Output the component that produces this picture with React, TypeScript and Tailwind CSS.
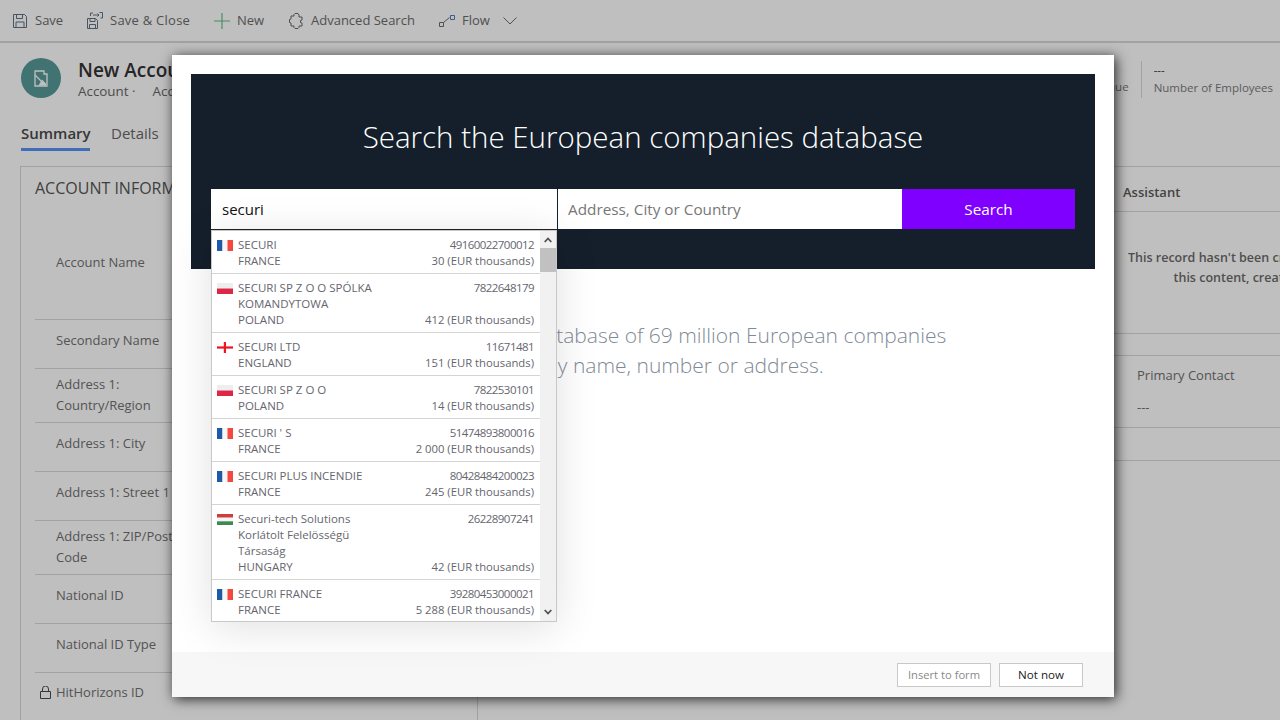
import React from 'react';

const font = "font-['Open_Sans','Noto_Sans',sans-serif]";

interface Company {
  flag: 'fr' | 'pl' | 'en' | 'hu';
  name: string[];
  country: string;
  id: string;
  revenue: string;
}

const companies: Company[] = [
  { flag: 'fr', name: ['SECURI'], country: 'FRANCE', id: '49160022700012', revenue: '30 (EUR thousands)' },
  { flag: 'pl', name: ['SECURI SP Z O O SPÓLKA', 'KOMANDYTOWA'], country: 'POLAND', id: '7822648179', revenue: '412 (EUR thousands)' },
  { flag: 'en', name: ['SECURI LTD'], country: 'ENGLAND', id: '11671481', revenue: '151 (EUR thousands)' },
  { flag: 'pl', name: ['SECURI SP Z O O'], country: 'POLAND', id: '7822530101', revenue: '14 (EUR thousands)' },
  { flag: 'fr', name: ["SECURI ' S"], country: 'FRANCE', id: '51474893800016', revenue: '2 000 (EUR thousands)' },
  { flag: 'fr', name: ['SECURI PLUS INCENDIE'], country: 'FRANCE', id: '80428484200023', revenue: '245 (EUR thousands)' },
  { flag: 'hu', name: ['Securi-tech Solutions', 'Korlátolt Felelösségü', 'Társaság'], country: 'HUNGARY', id: '26228907241', revenue: '42 (EUR thousands)' },
  { flag: 'fr', name: ['SECURI FRANCE'], country: 'FRANCE', id: '39280453000021', revenue: '5 288 (EUR thousands)' },
];

const formRows = [
  { label: ['Account Name'], cls: 'h-[79px] pt-[11px]' },
  { label: ['Secondary Name'], cls: 'h-[49px] pt-[10px]' },
  { label: ['Address 1:', 'Country/Region'], cls: 'h-[54px] pt-[5px]' },
  { label: ['Address 1: City'], cls: 'h-[49px] pt-[10px]' },
  { label: ['Address 1: Street 1'], cls: 'h-[49px] pt-[10px]' },
  { label: ['Address 1: ZIP/Postal', 'Code'], cls: 'h-[54px] pt-[5px]' },
  { label: ['National ID'], cls: 'h-[49px] pt-[10px]' },
  { label: ['National ID Type'], cls: 'h-[49px] pt-[10px]' },
];

const Flag = ({ code }: { code: Company['flag'] }) => (
  <svg width="16" height="11" viewBox="0 0 16 11" className="shrink-0 mt-[3px]">
    {code === 'fr' && (
      <>
        <rect width="5.5" height="11" fill="#1d5aa8" />
        <rect x="5.5" width="5" height="11" fill="#f7f7f7" />
        <rect x="10.5" width="5.5" height="11" fill="#f5483c" />
      </>
    )}
    {code === 'pl' && (
      <>
        <rect width="16" height="5.5" fill="#eeeeee" />
        <rect y="5.5" width="16" height="5.5" fill="#dc2747" />
      </>
    )}
    {code === 'en' && (
      <>
        <rect width="16" height="11" fill="#ffffff" />
        <rect x="6.8" width="2.2" height="11" fill="#f0141e" />
        <rect y="4.4" width="16" height="2.2" fill="#f0141e" />
      </>
    )}
    {code === 'hu' && (
      <>
        <rect width="16" height="3.7" fill="#cf3f3a" />
        <rect y="3.7" width="16" height="3.6" fill="#f5f5f5" />
        <rect y="7.3" width="16" height="3.7" fill="#3f8a52" />
      </>
    )}
  </svg>
);

const ToolbarItem = ({ icon, label, cls, labelCls = '' }: { icon: React.ReactNode; label: string; cls: string; labelCls?: string }) => (
  <div className={`flex items-center ${cls}`}>
    {icon}
    <span className={`text-[13px] text-[#6b6b6b] ${labelCls}`}>{label}</span>
  </div>
);

const Toolbar = () => (
  <div className="h-[43px] border-b-2 border-[#d8d8d8] flex items-center pl-[13px]">
    <ToolbarItem
      cls="gap-[8px] w-[74px]"
      label="Save"
      icon={
        <svg width="14" height="14" viewBox="0 0 14 14" fill="none" stroke="#5f7082" strokeWidth="1">
          <path d="M.5.5h11l2 2v11H.5zM3.500.5v4h6v-4M3 13.500V8h8v5.500" />
        </svg>
      }
    />
    <ToolbarItem
      cls="gap-[7px] w-[127px]"
      label="Save & Close"
      labelCls="tracking-[0.25px]"
      icon={
        <svg width="16" height="17" viewBox="0 0 16 17" fill="none" stroke="#5f7082" strokeWidth="1">
          <path d="M.5 6.500h8l2 2v8H.5zM3 6.500v3h5v-3M2.500 16.500V12.500h6v4M3.500 4V1H6M12.500.5h3V6h-2M6 3h6M10.500 1.500 12 3l-1.500 1.500" />
        </svg>
      }
    />
    <ToolbarItem
      cls="gap-[7px] w-[75px]"
      label="New"
      icon={
        <svg width="16" height="16" viewBox="0 0 16 16" stroke="#63bd84" strokeWidth="1.200">
          <path d="M8 0v16M0 8h16" />
        </svg>
      }
    />
    <ToolbarItem
      cls="gap-[7px] w-[150px]"
      label="Advanced Search"
      icon={
        <svg width="15" height="16" viewBox="0 0 15 16" fill="none" stroke="#666666" strokeWidth="1">
          <path d="M6 .5h3l1 1.500V4h3v3l-1.500.5v2L13 10v3h-3v1.500l-1 1H6l-1-1V13H2v-3L.5 9.500v-3L2 6V3h3V1.500z" />
        </svg>
      }
    />
    <ToolbarItem
      cls="gap-[7px] w-[64px]"
      label="Flow"
      icon={
        <svg width="16" height="12" viewBox="0 0 16 12" fill="none" strokeWidth="1">
          <path d="M.5 7.500h4v4h-4zM4.500 7.500l6-5" stroke="#6b6b6b" />
          <path d="M11.500.5h4v4h-4z" stroke="#4f7fb8" />
        </svg>
      }
    />
    <svg width="14" height="8" viewBox="0 0 14 8" fill="none" stroke="#6b6b6b" strokeWidth="1">
      <path d="M.5.5 7 7 13.500.5" />
    </svg>
  </div>
);

const RecordHeader = () => (
  <div className="h-[58px] mt-[6px] pl-[21px] flex items-center">
    <div className="w-[40px] h-[40px] rounded-full bg-[#579a9a] flex items-center justify-center">
      <svg width="16" height="17" viewBox="0 0 16 17" fill="none" stroke="#ffffff" strokeWidth="1.300">
        <path d="M2 1h9v3h3v12H2z" />
        <path d="M2 5l9 9" />
        <path d="M9 9.500l4 4v2H5.500z" fill="#ffffff" stroke="none" />
      </svg>
    </div>
    <div className="ml-[17px] w-[300px] pt-[2px]">
      <div className="text-[19px] leading-[24px] font-semibold text-[#333333]">New Account</div>
      <div className="text-[13.400px] leading-[18px] text-[#666666]">
        Account ·<span className="ml-[17px]">Account</span>
      </div>
    </div>
    <div className="ml-auto flex items-start pr-[7px] pt-[2px]">
      <div className="text-[11.500px] text-[#7a7a7a] pr-[12px] pt-[17px]">Annual Revenue</div>
      <div className="border-l border-[#d8d8d8] h-[37px] pl-[12px] text-[11.500px] text-[#7a7a7a]">
        <div className="leading-[18px] text-[#333333]">---</div>
        <div className="leading-[18px]">Number of Employees</div>
      </div>
    </div>
  </div>
);

const Tabs = () => (
  <div className="h-[59px] pl-[21px] flex gap-[21px] pt-[15px]">
    <div className="h-[29px] border-b-[3px] border-[#5592f5] text-[15px] font-semibold text-[#4a4a4a] leading-[22px] w-[69px] whitespace-nowrap">Summary</div>
    <div className="text-[15px] text-[#666666] leading-[22px]">Details</div>
  </div>
);

const FormCard = () => (
  <div className="border border-b-0 border-[#d8d8d8] h-[554px] pl-[14px]">
    <div className="h-[74px] pt-[9px] text-[16px] leading-[24px] text-[#555555] whitespace-nowrap">ACCOUNT INFORMATION</div>
    {formRows.map((row) => (
      <div key={row.label[0] + row.label.length} className={`${row.cls} border-b border-[#d8d8d8] pl-[21px] text-[13px] leading-[21px] text-[#707070]`}>
        {row.label.map((line) => (
          <div key={line}>{line}</div>
        ))}
      </div>
    ))}
    <div className="flex items-center gap-[5px] pl-[5px] pt-[9px] text-[13px] leading-[21px] text-[#707070]">
      <svg width="11" height="13" viewBox="0 0 11 13" fill="none" stroke="#4a4a4a" strokeWidth="1">
        <path d="M.5 5.500h10v7H.5zM2.500 5.500V3a3 3 0 0 1 6 0v2.500" />
      </svg>
      HitHorizons ID
    </div>
  </div>
);

const RightColumn = () => (
  <div className="text-[13px]">
    <div className="h-[46px] border-y border-[#d8d8d8] pl-[43px] pt-[3px] leading-[44px] font-semibold text-[#5a5a5a]">Assistant</div>
    <div className="h-[122px] border-b border-[#d8d8d8] pt-[36px] pr-[26px] text-center text-[12.500px] leading-[20px] font-semibold text-[#6a6a6a]">
      <div>This record hasn't been created yet. To enable</div>
      <div>this content, create the record.</div>
    </div>
    <div className="h-[73px] mt-[21px] border-y border-[#d8d8d8] pl-[57px] pt-[8px] text-[#707070] leading-[22px]">
      <div>Primary Contact</div>
      <div className="mt-[10px]">---</div>
    </div>
    <div className="h-[33px] border-b border-[#d8d8d8]" />
  </div>
);

const SearchDropdown = () => (
  <div className="absolute left-0 top-[41px] w-[346px] h-[392px] bg-white border border-[#c8c8c8] shadow-[0_6px_40px_rgba(0,0,0,0.12)] flex overflow-hidden">
    <div className="w-[328px] shrink-0">
      {companies.map((c) => (
        <div key={c.id} className="flex border-b border-[#d4d4d4] pl-[5px] pr-[6px] pt-[6px] pb-[4px] text-[11.500px] leading-[16px] text-[#66666e]">
          <Flag code={c.flag} />
          <div className="ml-[5px] flex-1 flex justify-between">
            <div className="flex flex-col whitespace-nowrap">
              {c.name.map((line) => (
                <div key={line}>{line}</div>
              ))}
              <div>{c.country}</div>
            </div>
            <div className="flex flex-col justify-between items-end whitespace-nowrap">
              <div className="tracking-[-0.55px]">{c.id}</div>
              <div className="text-[11.300px]">{c.revenue}</div>
            </div>
          </div>
        </div>
      ))}
    </div>
    <div className="w-[16px] bg-[#f1f1f1] flex flex-col">
      <div className="h-[17px] flex items-center justify-center">
        <svg width="8" height="6" viewBox="0 0 8 6" fill="none" stroke="#505050" strokeWidth="1.800">
          <path d="M.7 5 4 1.500 7.300 5" />
        </svg>
      </div>
      <div className="h-[24px] bg-[#c1c1c1]" />
      <div className="flex-1 flex items-end justify-center pb-[6px]">
        <svg width="8" height="6" viewBox="0 0 8 6" fill="none" stroke="#505050" strokeWidth="1.800">
          <path d="M.7 1 4 4.500 7.300 1" />
        </svg>
      </div>
    </div>
  </div>
);

const SearchModal = () => (
  <div className="absolute left-[172px] top-[55px] w-[942px] h-[642px] bg-white shadow-[2px_2px_12px_rgba(0,0,0,0.8)] flex flex-col">
    <div className="flex-1 p-[19px]">
      <div className="h-[195px] bg-[#141f2b] px-[20px] pt-[43px]">
        <div className="text-center text-[29.500px] leading-[40px] font-light text-white">Search the European companies database</div>
        <div className="relative mt-[32px] flex h-[40px]">
          <div className="w-[346px] bg-white flex items-center pl-[11px] text-[15px] text-[#111111]">securi</div>
          <div className="ml-[1px] w-[344px] bg-white flex items-center pl-[10px] pt-[1px] text-[15.300px] text-[#777777]">Address, City or Country</div>
          <div className="flex-1 bg-[#8000ff] flex items-center justify-center text-[15.300px] text-white">Search</div>
          <div className="absolute left-0 top-[40px] w-[346px] h-[1px] bg-[#222222]" />
          <SearchDropdown />
        </div>
      </div>
      <div className="pt-[51px] pl-[152px] text-[21px] leading-[30px] font-light text-[#7f8a96] whitespace-nowrap">
        <div>Search through our database of 69 million European companies</div>
        <div className="ml-[5px]">Find a company, by any name, number or address.</div>
      </div>
    </div>
    <div className="h-[45px] bg-[#f7f7f7] flex items-center justify-end gap-[8px] pr-[31px]">
      <div className="w-[94px] h-[24px] bg-white border border-[#c8c8c8] pt-[1px] flex items-center justify-center text-[11.200px] text-[#8a8a8a]">Insert to form</div>
      <div className="w-[84px] h-[24px] bg-white border border-[#c8c8c8] flex items-center justify-center text-[11.600px] text-[#222222]">Not now</div>
    </div>
  </div>
);

export default function App() {
  return (
    <div className={`relative w-[1280px] h-[720px] overflow-hidden bg-white ${font}`}>
      <Toolbar />
      <RecordHeader />
      <Tabs />
      <div className="grid grid-cols-[458px_602px_400px] ml-[20px]">
        <FormCard />
        <div />
        <RightColumn />
      </div>
      <div className="absolute inset-0 bg-black/25" />
      <SearchModal />
    </div>
  );
}
